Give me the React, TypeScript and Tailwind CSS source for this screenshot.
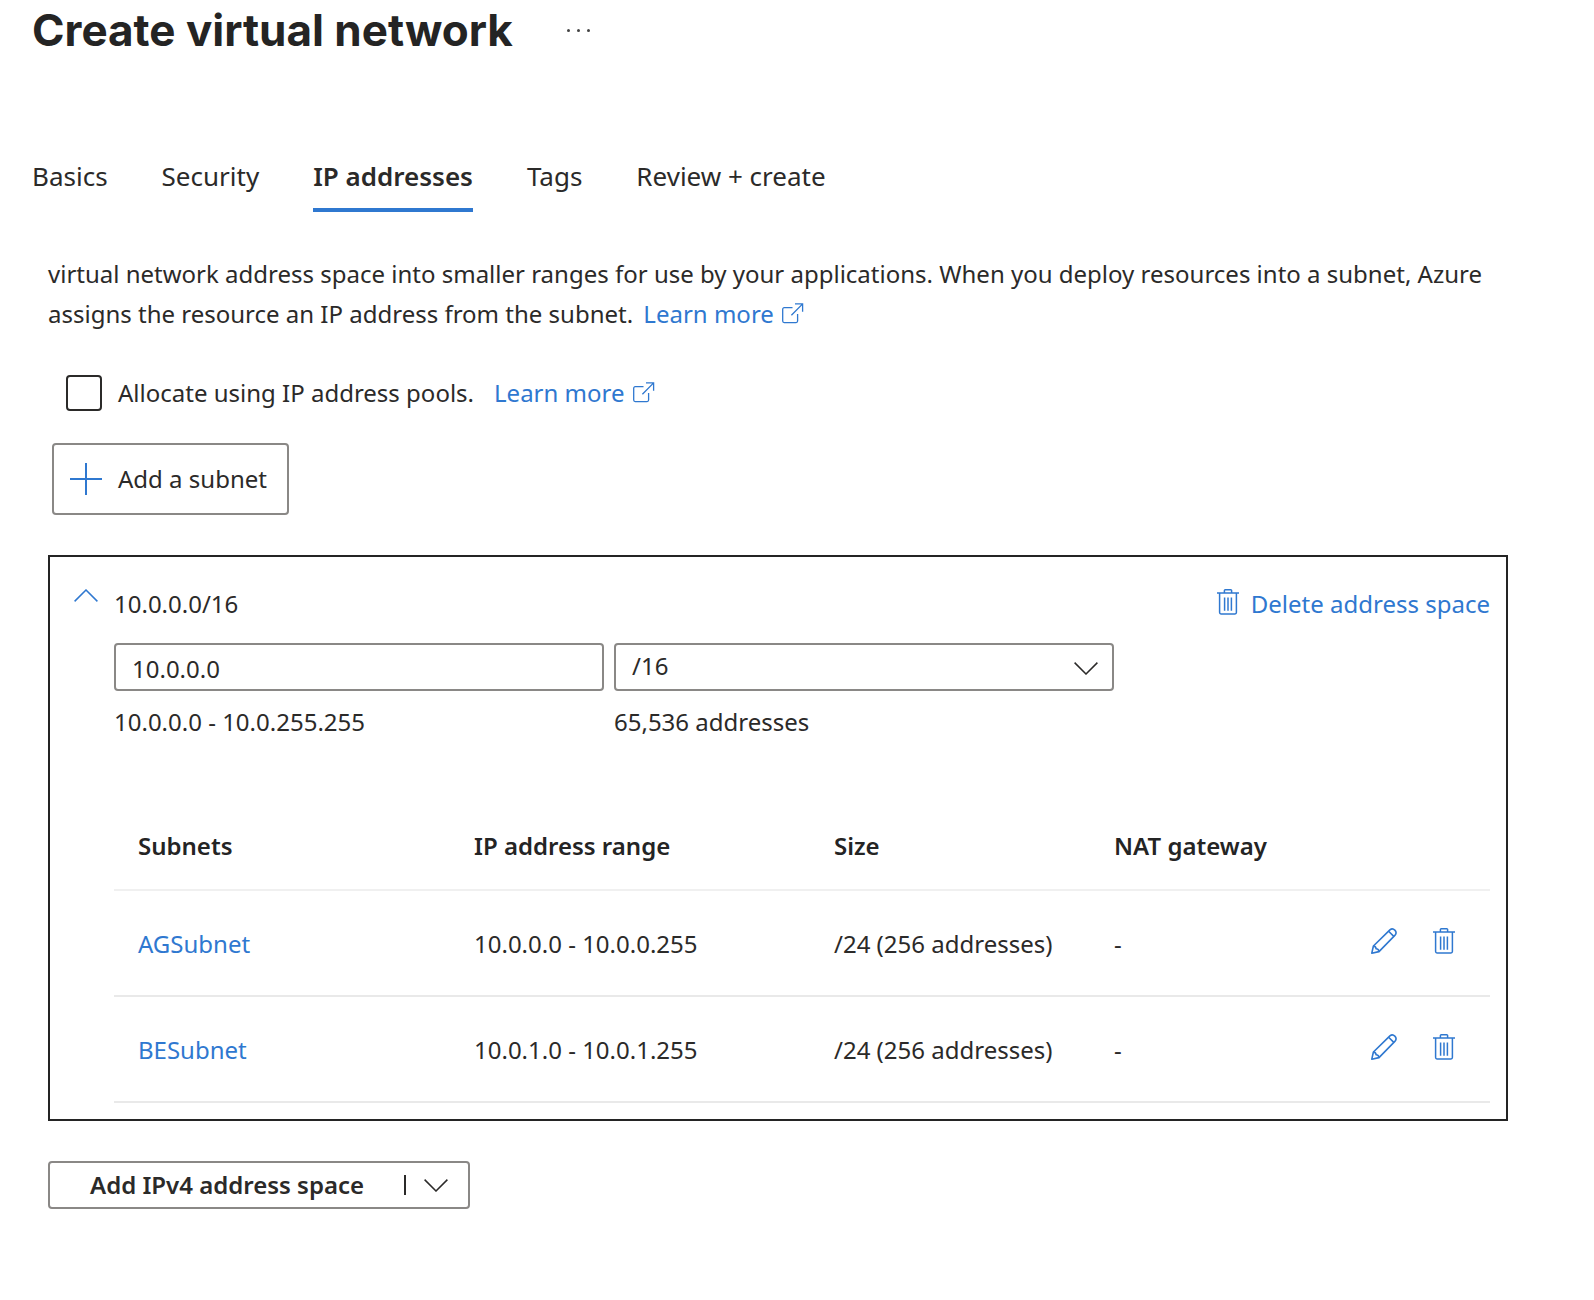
import React from 'react';

type IconProps = { className?: string };

function ExternalIcon({ className = '' }: IconProps) {
  return (
    <svg viewBox="0 0 22 22" className={`inline-block h-[22px] w-[22px] shrink-0 ${className}`} fill="none" stroke="currentColor" strokeWidth="1.3" aria-hidden="true">
      <path d="M10.5 4.7H2.2A1.5 1.5 0 0 0 .7 6.2v11.9a1.5 1.5 0 0 0 1.5 1.5h11.9a1.5 1.5 0 0 0 1.5-1.5V11" />
      <path d="M13 .9h7.6v7.8M20.4 1.1 9.4 12.3" />
    </svg>
  );
}

function TrashIcon() {
  return (
    <svg viewBox="0 0 22 26" className="h-[26px] w-[22px] shrink-0" fill="none" stroke="currentColor" strokeWidth="1.5" aria-hidden="true">
      <path d="M0 4h22M7.4 4V1.6a.8.8 0 0 1 .8-.8h5.6a.8.8 0 0 1 .8.8V4" />
      <path d="M2.6 4v19.6c0 .9.5 1.4 1.4 1.4h14c.9 0 1.4-.5 1.4-1.4V4" />
      <path d="M7.6 8.4v13.4M11 8.4v13.4M14.4 8.4v13.4" />
    </svg>
  );
}

function PencilIcon() {
  return (
    <svg viewBox="0 0 26 26" className="h-[26px] w-[26px] shrink-0" fill="none" stroke="currentColor" strokeWidth="1.6" strokeLinejoin="round" aria-hidden="true">
      <path d="M.8 25.2 2.4 18 18.9 1.9a3.7 3.7 0 0 1 5.2 5.2L8 23.6Z" />
      <path d="M17.6 3.2l5.2 5.2M2.4 18c1.6.2 2.6.8 2.8 2.8 2 .2 2.6 1.2 2.8 2.8" />
    </svg>
  );
}

function Chevron({ up = false, className = '' }: IconProps & { up?: boolean }) {
  return (
    <svg viewBox="0 0 24 13" className={`h-[13px] w-6 shrink-0 ${className}`} fill="none" stroke="currentColor" strokeWidth="1.5" aria-hidden="true">
      <path d={up ? 'M.6 12.4 12 1l11.4 11.4' : 'M.6 .6 12 12 23.4 .6'} />
    </svg>
  );
}

const tabs = ['Basics', 'Security', 'IP addresses', 'Tags', 'Review + create'];

const subnets = [
  { name: 'AGSubnet', range: '10.0.0.0 - 10.0.0.255', size: '/24 (256 addresses)', nat: '-' },
  { name: 'BESubnet', range: '10.0.1.0 - 10.0.1.255', size: '/24 (256 addresses)', nat: '-' },
];

function LearnMore({ className = '' }: IconProps) {
  return (
    <a href="#learn" className={`whitespace-nowrap text-[#2f78d0] ${className}`}>
      Learn more <ExternalIcon className="ml-0.5 align-[-2px]" />
    </a>
  );
}

export default function App() {
  return (
    <main className="min-h-screen bg-white pr-[86px] pb-20 font-['Noto_Sans',sans-serif] text-[24px] leading-10 text-[#2b2a29]">
      <header className="flex items-center gap-[52px] pl-8">
        <h1 className="font-['Inter',sans-serif] text-[44px] leading-[60px] font-bold text-[#242424]">Create virtual network</h1>
        <button type="button" aria-label="More options" className="flex gap-[7px] p-0.5">
          <span className="size-[3px] rounded-full bg-[#444]" />
          <span className="size-[3px] rounded-full bg-[#444]" />
          <span className="size-[3px] rounded-full bg-[#444]" />
        </button>
      </header>

      <div role="tablist" className="mt-24 flex gap-[54px] pl-8 text-[26px]">
        {tabs.map((tab) => (
          <button
            key={tab}
            type="button"
            role="tab"
            aria-selected={tab === 'IP addresses'}
            className={
              tab === 'IP addresses'
                ? 'border-b-4 border-[#2f78d0] pb-3 font-semibold'
                : 'border-b-4 border-transparent pb-3'
            }
          >
            {tab}
          </button>
        ))}
      </div>

      <div className="pt-[42px] pl-12">
        <p>
          virtual network address space into smaller ranges for use by your applications. When you deploy resources into a subnet, Azure
          assigns the resource an IP address from the subnet. <LearnMore className="pl-1" />
        </p>

        <div className="mt-[39px] flex items-center pl-[18px]">
          <input id="pools" type="checkbox" className="size-9 appearance-none rounded-[4px] border-2 border-[#2b2a29] checked:bg-[#2f78d0]" />
          <label htmlFor="pools" className="pl-4">Allocate using IP address pools.</label>
          <LearnMore className="pl-5" />
        </div>

        <button type="button" className="mt-[30px] ml-1 flex h-[72px] items-center gap-4 rounded-[4px] border-2 border-[#8a8886] pr-5 pl-4">
          <svg viewBox="0 0 32 32" className="size-8 text-[#2f78d0]" stroke="currentColor" strokeWidth="2" aria-hidden="true">
            <path d="M16 0v32M0 16h32" />
          </svg>
          Add a subnet
        </button>

        <section className="mt-10 border-2 border-[#242424] pt-[27px] pr-4 pb-4 pl-6">
          <div className="flex">
            <button type="button" aria-label="Collapse address space" className="mt-[5px] flex h-6 w-10 items-start text-[#2f78d0]">
              <Chevron up />
            </button>
            <span>10.0.0.0/16</span>
            <button type="button" className="ml-auto flex items-start gap-3 text-[#2f78d0]">
              <span className="pt-[5px]"><TrashIcon /></span>
              Delete address space
            </button>
          </div>

          <div className="pl-10">
            <div className="mt-[19px] grid max-w-[1000px] grid-cols-[49fr_50fr] gap-x-[10px]">
              <input
                aria-label="Address space start"
                defaultValue="10.0.0.0"
                className="h-12 w-full min-w-0 rounded-[4px] border-2 border-[#8a8886] px-4 pt-0.5"
              />
              <div className="relative">
                <select aria-label="Address space size" className="h-12 w-full appearance-none rounded-[4px] border-2 border-[#8a8886] px-4 pb-0.5">
                  <option>/16</option>
                </select>
                <Chevron className="pointer-events-none absolute top-[19px] right-4" />
              </div>
              <span className="mt-[11px]">10.0.0.0 - 10.0.255.255</span>
              <span className="mt-[11px]">65,536 addresses</span>
            </div>

            <table className="mt-16 w-full table-fixed text-left">
              <colgroup>
                <col className="w-[360px]" />
                <col className="w-[360px]" />
                <col className="w-[280px]" />
                <col className="w-[200px]" />
                <col />
              </colgroup>
              <thead>
                <tr className="h-[84px] border-b-2 border-[#f0f0f0] text-[#242424]">
                  <th className="pb-1 pl-6 font-semibold">Subnets</th>
                  <th className="pb-1 font-semibold">IP address range</th>
                  <th className="pb-1 font-semibold">Size</th>
                  <th className="pb-1 font-semibold">NAT gateway</th>
                  <th aria-label="Actions" />
                </tr>
              </thead>
              <tbody>
                {subnets.map((s) => (
                  <tr key={s.name} className="h-[106px] border-b-2 border-[#e9e9e9]">
                    <td className="pt-0.5 pl-6"><a href="#subnet" className="text-[#2f78d0]">{s.name}</a></td>
                    <td className="pt-0.5">{s.range}</td>
                    <td className="pt-0.5">{s.size}</td>
                    <td className="pt-0.5">{s.nat}</td>
                    <td className="pb-1">
                      <div className="flex justify-end gap-9 pr-[35px] text-[#2f78d0]">
                        <button type="button" aria-label={`Edit ${s.name}`}><PencilIcon /></button>
                        <button type="button" aria-label={`Delete ${s.name}`}><TrashIcon /></button>
                      </div>
                    </td>
                  </tr>
                ))}
              </tbody>
            </table>
          </div>
        </section>

        <button type="button" className="mt-10 flex h-12 items-center rounded-[4px] border-2 border-[#8a8886] pr-5 pl-10 font-semibold">
          Add IPv4 address space
          <span className="ml-10 h-5 w-0.5 bg-[#2b2a29]" />
          <Chevron className="ml-[18px]" />
        </button>
      </div>
    </main>
  );
}
